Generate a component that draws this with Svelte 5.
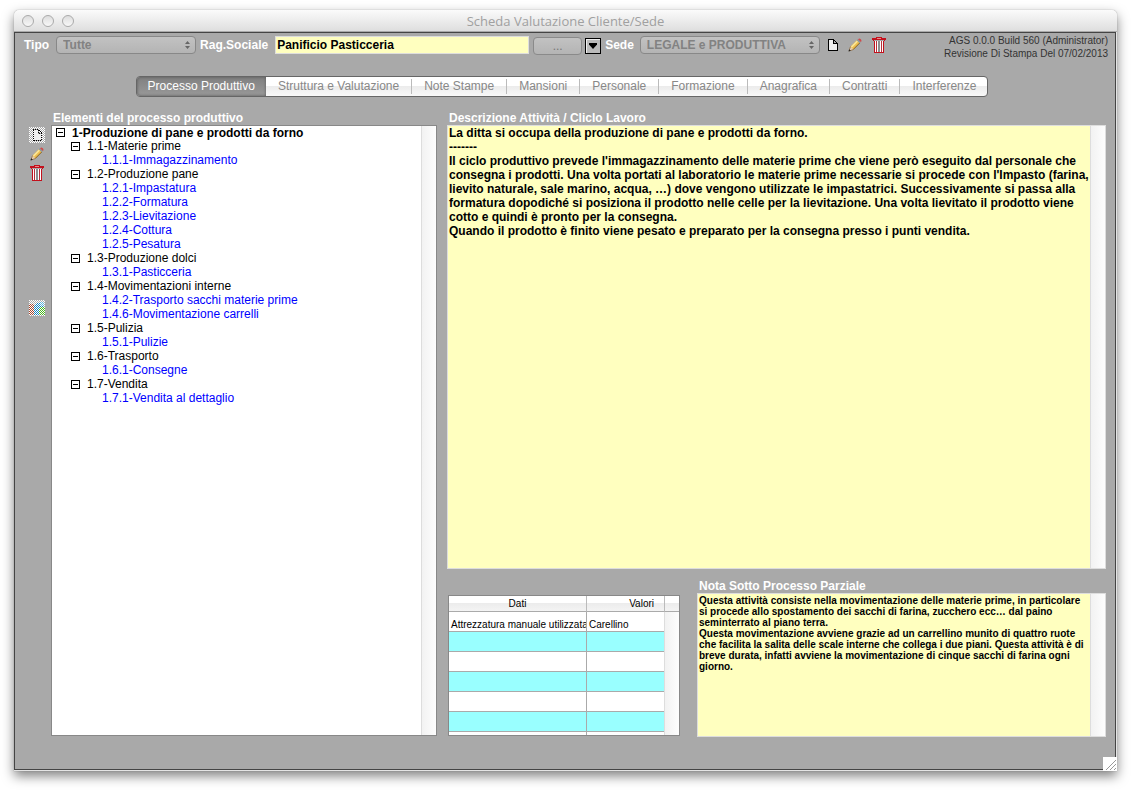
<script>
  const tabs = [
    'Processo Produttivo', 'Struttura e Valutazione', 'Note Stampe', 'Mansioni', 'Personale',
    'Formazione', 'Anagrafica', 'Contratti', 'Interferenze'
  ];
  let active = $state('Processo Produttivo');
  let company = $state('Panificio Pasticceria');

  let groups = $state([
    { name: '1.1-Materie prime', open: true, items: ['1.1.1-Immagazzinamento'] },
    { name: '1.2-Produzione pane', open: true, items: ['1.2.1-Impastatura', '1.2.2-Formatura', '1.2.3-Lievitazione', '1.2.4-Cottura', '1.2.5-Pesatura'] },
    { name: '1.3-Produzione dolci', open: true, items: ['1.3.1-Pasticceria'] },
    { name: '1.4-Movimentazioni interne', open: true, items: ['1.4.2-Trasporto sacchi materie prime', '1.4.6-Movimentazione carrelli'] },
    { name: '1.5-Pulizia', open: true, items: ['1.5.1-Pulizie'] },
    { name: '1.6-Trasporto', open: true, items: ['1.6.1-Consegne'] },
    { name: '1.7-Vendita', open: true, items: ['1.7.1-Vendita al dettaglio'] }
  ]);
  let rootOpen = $state(true);

  let description = $state(
    "La ditta si occupa della produzione di pane e prodotti da forno.\n-------\nIl ciclo produttivo prevede l'immagazzinamento delle materie prime che viene però eseguito dal personale che consegna i prodotti. Una volta portati al laboratorio le materie prime necessarie si procede con l'Impasto (farina, lievito naturale, sale marino, acqua, …) dove vengono utilizzate le impastatrici. Successivamente si passa alla formatura dopodiché si posiziona il prodotto nelle celle per la lievitazione. Una volta lievitato il prodotto viene cotto e quindi è pronto per la consegna.\nQuando il prodotto è finito viene pesato e preparato per la consegna presso i punti vendita."
  );
  let note = $state(
    'Questa attività consiste nella movimentazione delle materie prime, in particolare si procede allo spostamento dei sacchi di farina, zucchero ecc… dal paino seminterrato al piano terra.\nQuesta movimentazione avviene grazie ad un carrellino munito di quattro ruote che facilita la salita delle scale interne che collega i due piani. Questa attività è di breve durata, infatti avviene la movimentazione di cinque sacchi di farina ogni giorno.'
  );
  const rows = [['Attrezzatura manuale utilizzata', 'Carellino'], ['', ''], ['', ''], ['', ''], ['', ''], ['', ''], ['', '']];
</script>

{#snippet pencil()}
  <svg width="14" height="14" viewBox="0 0 14 14" aria-hidden="true">
    <path d="M1 13 2.500 8.500 9 2 12 5 5.500 11.500Z" fill="#efc050" />
    <path d="M3 8.500 9 2.500 10 3.500 4 9.500Z" fill="#fbe9a0" />
    <path d="M5 11.700 11.700 5" stroke="#7d5c28" stroke-width="1" />
    <path d="M2.500 8.500 1 13 5.500 11.500Z" fill="#e9d0b0" />
    <path d="M2.500 8.500 1 13 5.500 11.500" fill="none" stroke="#8c6c4c" stroke-width=".8" />
    <path d="M.5 13.500 1.200 11.300 2.800 12.800Z" fill="#222" />
    <path d="M8.700 2.300 10 1 13 4 11.700 5.300Z" fill="#8f999c" />
    <path d="M10 1.200Q11.500-.2 12.800 1.200T12.900 4Z" fill="#cf4b4b" />
  </svg>
{/snippet}

{#snippet trash()}
  <svg width="14" height="16" viewBox="0 0 14 16" shape-rendering="crispEdges" aria-hidden="true">
    <path d="M2 4h10v12H2z" fill="#fff" />
    <path d="M4 0h6v1H4zM0 1h14v2H0zM1 3h1v1H1zM12 3h1v1h-1zM2 4h1v12H2zM11 4h1v12h-1zM2 15h10v1H2z" fill="#c3101c" />
    <path d="M5 1h4v1H5z" fill="#e88" />
    <path d="M4 4h1v11H4zM9 4h1v11H9z" fill="#b5303a" />
    <path d="M6 4h2v11H6z" fill="#8b9090" />
  </svg>
{/snippet}

{#snippet doc()}
  <svg width="10" height="12" viewBox="0 0 10 12" shape-rendering="crispEdges" aria-hidden="true">
    <path d="M1 1h5v3h3v7H1z" fill="#eee" />
    <path d="M0 0h6v1H0zM0 0h1v12H0zM0 11h10v1H0zM9 4h1v8H9zM5 1h1v3H5zM5 4h5v1H5zM6 1h1v1H6zM7 2h1v1H7zM8 3h1v1H8z" fill="#000" />
  </svg>
{/snippet}

<div class="page">
  <main class="window">
    <header class="titlebar">
      <div class="lights">
        <button aria-label="Chiudi"></button><button aria-label="Riduci"></button><button aria-label="Ingrandisci"></button>
      </div>
      <h1>Scheda Valutazione Cliente/Sede</h1>
    </header>

    <div class="content">
      <div class="toolbar">
        <div class="controls">
          <label for="tipo">Tipo</label>
          <span class="pick tipo">
            <select id="tipo"><option>Tutte</option></select>
            <svg width="5" height="8" viewBox="0 0 5 8" aria-hidden="true"><path d="M0 3 2.500 0 5 3ZM0 5 2.500 8 5 5Z" fill="#666" /></svg>
          </span>
          <label for="rag">Rag.Sociale</label>
          <input id="rag" bind:value={company} />
          <button class="dots">...</button>
          <button class="drop" aria-label="Elenco">
            <svg width="8" height="6" viewBox="0 0 8 6" aria-hidden="true"><path d="M0 0h8v1.500L4 6 0 1.500Z" /></svg>
          </button>
          <label for="sede">Sede</label>
          <span class="pick sede">
            <select id="sede"><option>LEGALE e PRODUTTIVA</option></select>
            <svg width="5" height="8" viewBox="0 0 5 8" aria-hidden="true"><path d="M0 3 2.500 0 5 3ZM0 5 2.500 8 5 5Z" fill="#666" /></svg>
          </span>
          <div class="tools">
            <button class="icon" aria-label="Nuovo">{@render doc()}</button>
            <button class="icon" aria-label="Modifica">{@render pencil()}</button>
            <button class="icon" aria-label="Elimina">{@render trash()}</button>
          </div>
        </div>
        <p class="version">AGS 0.0.0 Build 560 (Administrator)<br />Revisione Di Stampa Del 07/02/2013</p>
      </div>

      <nav class="tabs">
        {#each tabs as tab}
          <button class:active={tab === active} onclick={() => (active = tab)}>{tab}</button>
        {/each}
      </nav>

      <div class="body">
        <aside class="side">
          <button class="icon" aria-label="Nuovo elemento">
            <svg width="16" height="16" viewBox="0 0 16 16" shape-rendering="crispEdges" aria-hidden="true">
              <defs>
                <pattern id="dither" width="2" height="2" patternUnits="userSpaceOnUse"><path d="M0 0h1v1H0zM1 1h1v1H1z" fill="#fff" /></pattern>
              </defs>
              <path d="M0 0h16v16H0z" fill="url(#dither)" />
              <path d="M5 3h4v4h4v6H5z" fill="#eee" />
              <path d="M4 2.500h6M4.500 3v11M5 13.500h8M12.500 6v8M9.500 3v4M10 6.500h3" fill="none" stroke="#000" stroke-dasharray="1 1" />
              <path d="M10 3h1v1h-1zM11 4h1v1h-1zM12 5h1v1h-1z" />
            </svg>
          </button>
          <button class="icon" aria-label="Modifica elemento">{@render pencil()}</button>
          <button class="icon" aria-label="Elimina elemento">{@render trash()}</button>
          <button class="icon palette" aria-label="Colori">
            <svg width="16" height="16" viewBox="0 0 16 16" shape-rendering="crispEdges" aria-hidden="true">
              <path d="M0 4h5v11H0z" fill="#a8442a" />
              <path d="M5 5 8 3h7v6l-5 6H5z" fill="#1686c4" />
              <path d="M11 2h4v4h-4z" fill="#5ab4e0" />
              <path d="M10 9 12 7h4v8h-6z" fill="#48b81e" />
              <path d="M0 0h16v16H0z" fill="url(#dither)" />
            </svg>
          </button>
        </aside>

        <section class="left">
          <h2>Elementi del processo produttivo</h2>
          <div class="tree">
            <ul>
              <li>
                <div class="row root">
                  <button class="toggle" class:shut={!rootOpen} aria-label="Espandi o comprimi" onclick={() => (rootOpen = !rootOpen)}></button>
                  <span>1-Produzione di pane e prodotti da forno</span>
                </div>
                {#if rootOpen}
                  <ul>
                    {#each groups as g}
                      <li>
                        <div class="row">
                          <button class="toggle" class:shut={!g.open} aria-label="Espandi o comprimi" onclick={() => (g.open = !g.open)}></button>
                          <span>{g.name}</span>
                        </div>
                        {#if g.open}
                          <ul class="leaves">
                            {#each g.items as item}<li><a href="#top">{item}</a></li>{/each}
                          </ul>
                        {/if}
                      </li>
                    {/each}
                  </ul>
                {/if}
              </li>
            </ul>
            <div class="track"></div>
          </div>
        </section>

        <section class="right">
          <div class="field grow">
            <label for="desc">Descrizione Attività / Cliclo Lavoro</label>
            <div class="area"><textarea id="desc" bind:value={description} spellcheck="false"></textarea><div class="track"></div></div>
          </div>
          <div class="bottom">
            <div class="grid">
              <table>
                <thead><tr><th>Dati</th><th class="val">Valori</th><th class="end"></th></tr></thead>
                <tbody>
                  {#each rows as [k, v]}
                    <tr><td>{k}</td><td class="v">{v}</td><td class="end"></td></tr>
                  {/each}
                </tbody>
              </table>
            </div>
            <div class="field">
              <label for="note">Nota Sotto Processo Parziale</label>
              <div class="area small"><textarea id="note" bind:value={note} spellcheck="false"></textarea><div class="track"></div></div>
            </div>
          </div>
        </section>
      </div>

      <svg class="grip" width="14" height="14" viewBox="0 0 14 14" aria-hidden="true">
        <path d="M0 0h14v14H0z" fill="#fff" /><path d="M3 13 13 3M7 13l6-6M11 13l2-2" stroke="#999" />
      </svg>
    </div>
  </main>
</div>

<style>
  :global(body) { background: #fff; }
  .page, .page * { box-sizing: border-box; }
  .page {
    display: flex;
    min-height: 100vh;
    padding: 10px 14px 20px;
    font: 12px/14px "Liberation Sans", Arial, sans-serif;
    color: #000;
  }
  button, select, input, textarea { font: inherit; margin: 0; padding: 0; border-radius: 0; outline: 0; }
  h1, h2, p, ul { margin: 0; padding: 0; }
  .window {
    flex: 1;
    min-width: 0;
    display: flex;
    flex-direction: column;
    border-radius: 5px 5px 0 0;
    box-shadow: 0 0 1px #777, 0 5px 12px rgba(0, 0, 0, .5);
    background: #e4e4e4;
    padding-bottom: 1px;
  }
  .titlebar {
    display: grid;
    grid-template-columns: 100px 1fr 100px;
    align-items: center;
    height: 22px;
    border-radius: 5px 5px 0 0;
    background: linear-gradient(#fbfbfb, #dedede);
    border-bottom: 1px solid #aaa;
  }
  .titlebar h1 { font: 13px/20px "Open Sans", sans-serif; color: #a0a0a0; text-align: center; }
  .lights { display: flex; gap: 8px; padding-left: 8px; }
  .lights button { width: 12px; height: 12px; border: 1px solid #aaa; border-radius: 50%; background: linear-gradient(#ddd, #f8f8f8); }

  .content {
    position: relative;
    flex: 1;
    display: flex;
    flex-direction: column;
    margin-right: 1px;
    border: 1px solid #444;
    background: #a9a9a9;
  }
  .toolbar { display: flex; align-items: flex-start; justify-content: space-between; height: 43px; padding: 0 7px 0 9px; }
  .controls { display: flex; align-items: flex-start; padding-top: 3px; }
  .controls label { font-weight: bold; line-height: 18px; color: #fff; white-space: nowrap; }
  #rag {
    width: 254px;
    height: 18px;
    margin: 0 4px 0 7px;
    border: 1px solid #ddd;
    padding: 0 1px;
    background: #ffffbf;
    font-weight: bold;
  }
  .pick { position: relative; display: flex; height: 18px; }
  .pick svg { position: absolute; right: 6px; top: 5px; pointer-events: none; }
  .pick select {
    appearance: none;
    width: 100%;
    border: 1px solid #888;
    border-radius: 4px;
    padding: 0 16px 0 6px;
    background: linear-gradient(#c2c2c2, #b4b4b4);
    color: #828282;
    font-weight: bold;
  }
  .tipo { width: 140px; margin: 0 4px 0 7px; }
  .sede { width: 180px; margin: 0 8px 0 6px; }
  .dots {
    width: 49px;
    height: 18px;
    margin: 1px 3px 0 0;
    border: 1px solid #8a8a8a;
    border-radius: 4px;
    background: linear-gradient(#c2c2c2, #b4b4b4);
    color: #777;
  }
  .drop {
    display: grid;
    place-items: center;
    width: 16px;
    height: 16px;
    margin: 2px 4px 0 0;
    border: 1px solid #000;
    background: #bbb;
    box-shadow: inset 1px 1px #eee;
  }
  .tools { display: flex; gap: 10px; align-items: center; height: 18px; }
  .icon { display: block; border: 0; background: none; }
  .icon svg { display: block; }
  .version { padding-top: 1px; font-size: 10px; line-height: 13px; color: #333; text-align: right; white-space: nowrap; }

  .tabs {
    display: flex;
    align-self: center;
    height: 21px;
    margin-right: 6px;
    border: 1px solid #666;
    border-radius: 4px;
    background: linear-gradient(#fff 45%, #ececec 50%, #f8f8f8);
  }
  .tabs button { position: relative; border: 0; padding: 0 12px 1px 13px; background: none; color: #888; white-space: nowrap; }
  .tabs button:last-child { padding-right: 11px; }
  .tabs button + button::before { content: ""; position: absolute; left: 0; top: 2px; bottom: 2px; width: 1px; background: #bbb; }
  .tabs .active + button { padding-left: 12px; }
  .tabs .active + button::before { display: none; }
  .tabs .active {
    padding: 0 11px 1px;
    border-radius: 3px 0 0 3px;
    background: linear-gradient(#808080, #999);
    box-shadow: inset 0 0 3px #555;
    color: #fff;
  }

  .body {
    flex: 1;
    display: grid;
    grid-template-columns: 36px minmax(0, 386fr) 10px minmax(0, 659fr);
    padding: 14px 9px 32px 0;
  }
  .side { display: flex; flex-direction: column; align-items: center; gap: 4px; padding: 16px 0 0 7px; }
  .palette { margin-top: 115px; }
  h2, .field label { display: block; padding-left: 2px; font-size: 12px; line-height: 14px; font-weight: bold; color: #fff; white-space: nowrap; }
  .left { display: flex; flex-direction: column; padding-bottom: 1px; }
  .tree {
    flex: 1;
    display: flex;
    justify-content: space-between;
    border: 1px solid #888;
    background: #fff;
  }
  .tree ul { list-style: none; }
  .tree > ul { padding-left: 4px; }
  .tree li ul { padding-left: 15px; }
  .tree li ul.leaves { padding-left: 31px; }
  .row { display: flex; align-items: center; gap: 7px; height: 14px; }
  .row.root { height: 13px; font-weight: bold; }
  .toggle { position: relative; width: 9px; height: 9px; border: 1px solid #000; background: #fff; }
  .toggle::before, .toggle.shut::after { content: ""; position: absolute; left: 1px; top: 3px; width: 5px; height: 1px; background: #000; }
  .toggle.shut::after { transform: rotate(90deg); }
  a { display: block; color: #00f; text-decoration: none; }
  .track { width: 15px; flex: none; border-left: 1px solid #ddd; background: linear-gradient(90deg, #f2f2f2, #fdfdfd); }

  .right { grid-column: 4; display: flex; flex-direction: column; gap: 10px; }
  .field { display: flex; flex-direction: column; min-width: 0; }
  .grow { flex: 1; }
  .area { flex: 1; display: flex; border: 1px solid #ddd; background: #ffffbf; }
  .area textarea {
    flex: 1;
    min-width: 0;
    border: 0;
    padding: 0 1px;
    resize: none;
    overflow: hidden;
    background: #ffffbf;
    font-weight: bold;
  }
  .area.small textarea { padding-top: 1px; font-size: 10px; line-height: 11px; }
  .bottom { display: grid; grid-template-columns: minmax(0, 232fr) minmax(0, 409fr); gap: 17px; height: 158px; padding-left: 1px; }
  .grid { margin-top: 16px; margin-bottom: 1px; overflow: hidden; border: 1px solid #888; background: #fff; }
  table { width: 100%; table-layout: fixed; border-collapse: separate; border-spacing: 0; font-size: 10px; line-height: 12px; }
  th { height: 16px; padding: 0; border-bottom: 1px solid #aaa; background: linear-gradient(#fff 45%, #ececec 50%, #f4f4f4); font-weight: normal; }
  th + th { border-left: 1px solid #bbb; }
  .val { width: 78px; padding-right: 10px; text-align: right; }
  th.end { width: 15px; }
  td { height: 20px; padding: 6px 2px 0; border-bottom: 1px solid #aaa; overflow: hidden; white-space: nowrap; }
  td.v { border-left: 1px solid #aaa; }
  tbody tr:nth-child(even) td { background: #9ff; }
  tbody tr td.end { border: 0; border-left: 1px solid #ddd; background: linear-gradient(90deg, #f2f2f2, #fdfdfd); }
  .grip { position: absolute; right: -2px; bottom: -2px; }
</style>
